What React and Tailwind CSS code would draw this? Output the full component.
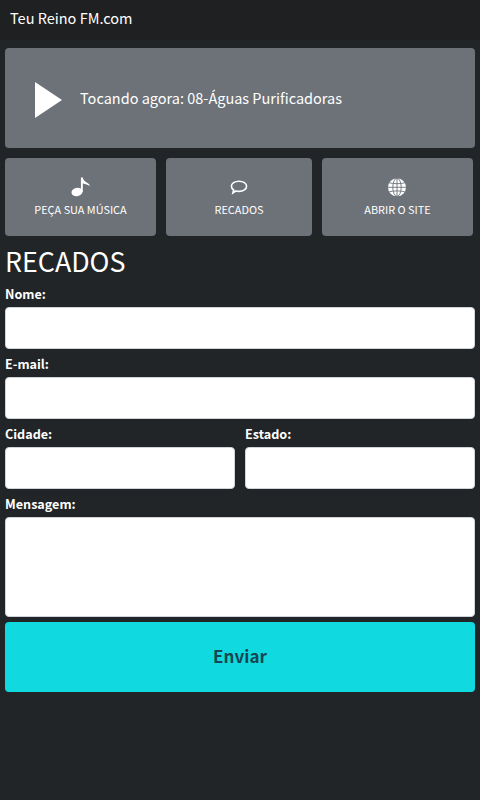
import React from 'react';

const labelClass = 'block h-[28px] pt-[8px] text-[12.6px] leading-[14px] font-bold text-white';

const NoteIcon = () => (
  <svg width="30" height="30" viewBox="0 0 30 30" fill="#fff" className="ml-[-1px]">
    <ellipse cx="12" cy="20" rx="5.6" ry="4.2" transform="rotate(-14 12 20)" />
    <path d="M15.9 5.6H17.8C18.4 8.6 20.2 9.8 22.2 10.8C23.8 11.7 24.6 12.6 24.8 14C23.2 12.8 20.2 12.2 17.8 11.2V20H15.9Z" />
  </svg>
);

const CommentIcon = () => (
  <svg width="30" height="30" viewBox="0 0 30 30" fill="none" stroke="#fff" strokeWidth="1.6">
    <path d="M15 9.2C19.3 9.2 22.6 11.5 22.6 14.3C22.6 17.2 19.3 19.4 15 19.4C13.8 19.4 12.7 19.3 11.7 19L8.9 20.9L9.6 17.9C8.2 17 7.4 15.7 7.4 14.3C7.4 11.5 10.7 9.2 15 9.2Z" />
  </svg>
);

const GlobeIcon = () => (
  <svg width="30" height="30" viewBox="0 0 30 30" className="ml-[-1px]">
    <circle cx="15" cy="15.3" r="9" fill="#fff" />
    <g fill="none" stroke="#6c7278" strokeWidth="0.9">
      <ellipse cx="15" cy="15.3" rx="4.2" ry="9" />
      <path d="M15 6.3V24.3M6 15.3H24M7.2 10.8C11 12 19 12 22.8 10.8M7.2 19.8C11 18.6 19 18.6 22.8 19.8" />
    </g>
  </svg>
);

const Field = ({ label, className = '' }) => (
  <div className={className}>
    <label className={labelClass}>{label}</label>
    <input type="text" className="block w-full h-[42px] bg-white rounded-[4px] border border-[#ced4da]" />
  </div>
);

const ActionButton = ({ icon, label, className = '' }) => (
  <button className={`h-[78px] bg-[#6c7278] rounded-[4px] flex flex-col items-center pt-[14px] text-white ${className}`}>
    <span className="h-[30px] flex items-center justify-center">{icon}</span>
    <span className="mt-[-1px] text-[10.9px] leading-[16px]">{label}</span>
  </button>
);

export default function App() {
  return (
    <div className="min-h-[800px] bg-[#212527] font-['Noto_Sans_CJK_SC','Noto_Sans',sans-serif]">
      <div className="h-[40px] bg-[#1f2022] pl-[10px] pt-[8px] text-[14.5px] leading-[20px] text-white">Teu Reino FM.com</div>

      <div className="px-[5px] pt-[8px]">
        <div className="h-[100px] bg-[#6c7278] rounded-[4px] flex items-center pl-[30px]">
          <svg width="27" height="36" viewBox="0 0 27 36" className="shrink-0 mt-[4px]">
            <path d="M0 0L27 18L0 36Z" fill="#fff" />
          </svg>
          <span className="ml-[18px] text-[14.5px] leading-[20px] text-white">Tocando agora: 08-Águas Purificadoras</span>
        </div>

        <div className="mt-[10px] flex gap-[10px]">
          <ActionButton className="w-[151px]" label="PEÇA SUA MÚSICA" icon={<NoteIcon />} />
          <ActionButton className="w-[146px]" label="RECADOS" icon={<CommentIcon />} />
          <ActionButton className="w-[151px]" label="ABRIR O SITE" icon={<GlobeIcon />} />
        </div>

        <h2 className="h-[43px] pt-[7px] text-[26.8px] leading-[36px] text-white">RECADOS</h2>

        <Field label="Nome:" />
        <Field label="E-mail:" />
        <div className="flex gap-[10px]">
          <Field label="Cidade:" className="flex-1" />
          <Field label="Estado:" className="flex-1" />
        </div>
        <label className={labelClass}>Mensagem:</label>
        <textarea className="block w-full h-[100px] bg-white rounded-[4px] border border-[#ced4da] resize-none" />

        <button className="block mt-[5px] w-full h-[70px] pb-[2px] bg-[#10d9e0] rounded-[4px] text-[17px] font-semibold text-[#174552]">Enviar</button>
      </div>
    </div>
  );
}
